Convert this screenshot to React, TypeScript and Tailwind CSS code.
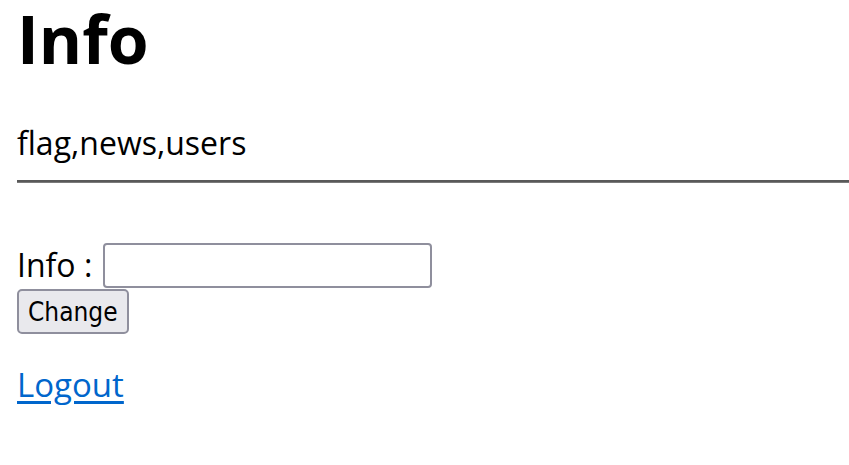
import React, { useState } from 'react';

export default function App() {
  const [info, setInfo] = useState('');

  return (
    <div className="min-h-screen bg-white text-black font-['Open_Sans',sans-serif] pl-[17px]">
      <h1 className="text-[66px] font-bold leading-[76px]">Info</h1>
      <p className="text-[32px] leading-[40px] mt-[47px]">flag,news,users</p>
      <hr className="mt-[17px] border-0 h-[3px] bg-[#7a7a7a] border-t-2 border-t-[#595959]" />
      <form className="mt-[60px]" onSubmit={(e) => e.preventDefault()}>
        <div className="flex items-center gap-[11px] h-[44px]">
          <span className="text-[32px] leading-[40px]">Info :</span>
          <input
            type="text"
            value={info}
            onChange={(e) => setInfo(e.target.value)}
            className="w-[329px] h-[45px] border-2 border-[#8f8f9d] rounded-[4px] bg-white px-2 outline-none"
          />
        </div>
        <button
          type="submit"
          className="mt-[2px] h-[45px] px-[9px] bg-[#e9e9ed] border-2 border-[#8f8f9d] rounded-[5px] text-[26px] leading-none font-['DejaVu_Sans_Condensed','DejaVu_Sans',sans-serif]"
        >
          Change
        </button>
      </form>
      <a
        href="#"
        className="block mt-[31px] w-fit text-[33px] leading-[40px] text-[#0066cc] underline underline-offset-[4px]"
      >
        Logout
      </a>
    </div>
  );
}
